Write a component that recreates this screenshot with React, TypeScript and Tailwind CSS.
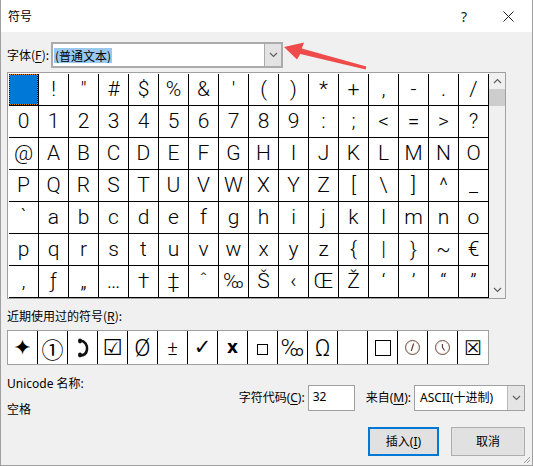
import React from 'react';

const rows: string[][] = [
  [' ', '!', '"', '#', '$', '%', '&', "'", '(', ')', '*', '+', ',', '-', '.', '/'],
  ['0', '1', '2', '3', '4', '5', '6', '7', '8', '9', ':', ';', '<', '=', '>', '?'],
  ['@', ...'ABCDEFGHIJKLMNO'.split('')],
  [...'PQRSTUVWXYZ'.split(''), '[', '\\', ']', '^', '_'],
  ['`', ...'abcdefghijklmno'.split('')],
  [...'pqrstuvwxyz'.split(''), '{', '|', '}', '~', '€'],
  ['‚', 'ƒ', '„', '…', '†', '‡', 'ˆ', '‰', 'Š', '‹', 'Œ', 'Ž', '\u2018', '\u2019', '\u201C', '\u201D'],
];

const Chevron = ({ up = false }: { up?: boolean }) => (
  <svg width="9" height="6" viewBox="0 0 9 6" className={up ? 'rotate-180' : ''}>
    <path d="M1 1l3.5 3.5L8 1" stroke="#606060" strokeWidth="1.2" fill="none" />
  </svg>
);

const Handset = () => (
  <svg width="12" height="20" viewBox="0 0 12 20">
    <path d="M3 2.5C8 3 10.5 7 10 11.5 9.6 15 7 17.5 3 17.5" stroke="#111" strokeWidth="2.6" fill="none" strokeLinecap="round" />
    <ellipse cx="3" cy="3" rx="2" ry="2.4" fill="#111" />
    <ellipse cx="3" cy="17" rx="2" ry="2.4" fill="#111" />
  </svg>
);

const Clock = ({ hand }: { hand: string }) => (
  <svg width="17" height="17" viewBox="0 0 17 17">
    <circle cx="8.5" cy="8.5" r="7" stroke="#6b4a3a" strokeWidth="1" fill="none" />
    <circle cx="8.5" cy="8.5" r="5.8" stroke="#c9a890" strokeWidth="0.6" strokeDasharray="1 1.8" fill="none" />
    <path d={hand} stroke="#5a3020" strokeWidth="1.1" fill="none" />
  </svg>
);

const thin = "font-['Roboto',sans-serif] font-light leading-none";

const recent: React.ReactNode[] = [
  <span className="text-[22px] leading-none">✦</span>,
  <span className="font-['Noto_Sans_CJK_SC',sans-serif] text-[22px] leading-none">①</span>,
  <Handset />,
  <span className="text-[22px] leading-none">☑</span>,
  <span className={`${thin} text-[24px]`}>Ø</span>,
  <span className={`${thin} text-[20px]`}>±</span>,
  <span className="text-[21px] leading-none">✓</span>,
  <span className="text-[17px] font-bold leading-none">x</span>,
  <span className="mt-[4px] block h-[11px] w-[11px] border border-black" />,
  <span className={`${thin} text-[24px]`}>‰</span>,
  <span className={`${thin} text-[24px]`}>Ω</span>,
  null,
  <span className="block h-[16px] w-[16px] border border-black" />,
  <Clock hand="M7.3 12L9.6 4.5" />,
  <Clock hand="M8.5 8.5L10.5 11.5M8.5 8.5L8.3 5" />,
  <span className="text-[20px] leading-none">☒</span>,
];

const Uline = ({ children }: { children: React.ReactNode }) => <span className="underline underline-offset-2">{children}</span>;

export default function App() {
  return (
    <div className="relative h-[466px] w-[533px] overflow-hidden border-x border-b border-[#a0a0a0] bg-[#f0f0f0] font-['Noto_Sans','Noto_Sans_CJK_SC',sans-serif] text-[12px] text-black">
      {/* title bar */}
      <div className="flex h-[32px] items-center bg-white pl-[7px]">
        <span className="flex-1 font-['Noto_Sans_CJK_SC',sans-serif] text-[12px]">符号</span>
        <span className="mr-[36px] text-[14px] text-[#222]">?</span>
        <svg width="11" height="11" viewBox="0 0 11 11" className="mr-[18px]">
          <path d="M0.5 0.5L10.5 10.5M10.5 0.5L0.5 10.5" stroke="#222" strokeWidth="1" />
        </svg>
      </div>

      <div className="pl-[6px] pr-[7px]">
        {/* font row */}
        <div className="mt-[10px] flex items-center">
          <span className="w-[44px] font-['Noto_Sans_CJK_SC',sans-serif]">
            字体(<Uline>F</Uline>):
          </span>
          <div className="flex h-[26px] w-[232px] border-2 border-[#ababab] bg-white">
            <div className="flex flex-1 items-center pl-[1px]">
              <span className="bg-[#99c9ef] px-[1px] font-['Noto_Sans_CJK_SC',sans-serif] leading-[15px]">(普通文本)</span>
            </div>
            <div className="flex w-[17px] items-center justify-center border-l border-[#ababab] bg-[#e3e3e3]">
              <Chevron />
            </div>
          </div>
        </div>

        {/* character grid */}
        <div className="mt-[4px] flex w-[499px] border border-[#a0a0a0] bg-white">
          <div className="pl-px pt-px">
            <div className="grid grid-cols-[repeat(16,30px)] font-['Roboto','Noto_Sans',sans-serif] text-[21px] font-light">
              {rows.flat().map((ch, i) =>
                i === 0 ? (
                  <div key={i} className="h-[32px] border-b border-r border-black bg-[#f08c00]">
                    <div className="h-full w-full border border-dotted border-black bg-[#0078d7] bg-clip-padding" />
                  </div>
                ) : (
                  <div key={i} className="flex h-[32px] items-center justify-center border-b border-r border-black leading-none">
                    {ch}
                  </div>
                )
              )}
            </div>
          </div>
          <div className="flex w-[16px] flex-col bg-[#f0f0f0]">
            <div className="flex h-[16px] items-center justify-center">
              <Chevron up />
            </div>
            <div className="h-[17px] bg-[#cdcdcd]" />
            <div className="flex-1" />
            <div className="flex h-[16px] items-center justify-center">
              <Chevron />
            </div>
          </div>
        </div>

        {/* recently used */}
        <div className="mt-[9px] font-['Noto_Sans_CJK_SC',sans-serif] leading-[16px]">
          近期使用过的符号(<Uline>R</Uline>):
        </div>
        <div className="mt-[6px] flex w-[482px] border border-[#a0a0a0] bg-white font-['DejaVu_Sans','Noto_Sans_CJK_SC',sans-serif]">
          {recent.map((r, i) => (
            <div
              key={i}
              className={`flex h-[33px] w-[30px] items-center justify-center ${i < 15 ? 'border-r border-black' : ''}`}
            >
              {r}
            </div>
          ))}
        </div>

        {/* bottom */}
        <div className="flex justify-between">
          <div className="pt-[11px] leading-[16px]">
            <div>Unicode 名称:</div>
            <div className="mt-[10px]">空格</div>
          </div>
          <div className="flex flex-col items-end pt-[20px]">
            <div className="flex h-[26px] items-center">
              <span className="mr-[3px]">
                字符代码(<Uline>C</Uline>):
              </span>
              <div className="flex h-full w-[47px] items-center border border-[#a0a0a0] bg-white pb-[2px] pl-[4px]">32</div>
              <span className="ml-[11px] mr-[3px]">
                来自(<Uline>M</Uline>):
              </span>
              <div className="flex h-full w-[111px] border border-[#a0a0a0] bg-white">
                <div className="flex flex-1 items-center pl-[5px]">ASCII(十进制)</div>
                <div className="flex w-[17px] items-center justify-center border-l border-[#b8b8b8] bg-[#e5e5e5]">
                  <Chevron />
                </div>
              </div>
            </div>
            <div className="mt-[16px] flex gap-[12px]">
              <button className="flex h-[29px] w-[71px] items-center justify-center border-2 border-[#0078d7] bg-[#e1e1e1]">
                插入(<Uline>I</Uline>)
              </button>
              <button className="flex h-[29px] w-[74px] items-center justify-center border border-[#adadad] bg-[#e1e1e1]">
                取消
              </button>
            </div>
          </div>
        </div>
      </div>

      {/* red arrow annotation */}
      <svg className="pointer-events-none absolute left-0 top-0" width="533" height="466" viewBox="0 0 533 466">
        <polygon
          points="283,47 303,42.5 300.8,48.6 365.3,66.6 364.7,69.4 299.3,54 296,59.5"
          fill="#ef4b4b"
        />
      </svg>

      {/* resize grip */}
      <svg className="absolute bottom-[1px] right-[1px]" width="8" height="8" viewBox="0 0 8 8">
        <path d="M7 1L1 7M7 4L4 7" stroke="#9a9a9a" strokeWidth="1" />
      </svg>
    </div>
  );
}
